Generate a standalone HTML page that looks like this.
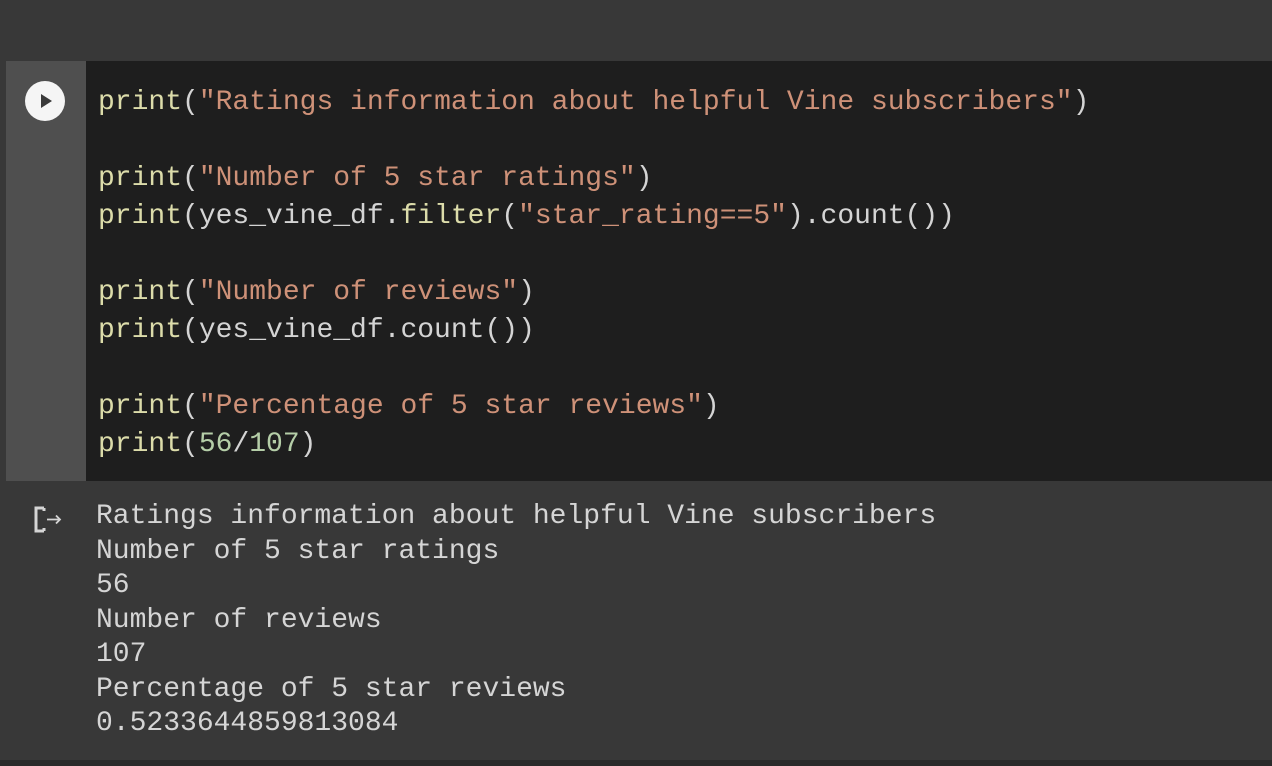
<!DOCTYPE html>
<html><head><style>
body{margin:0;width:1272px;height:766px;background:#383838;position:relative;overflow:hidden;font-family:"Liberation Mono",monospace;}
.cell{position:absolute;left:6px;top:61px;width:1266px;height:699px;background:#383838;}
.gut{position:absolute;left:6px;top:61px;width:80px;height:420px;background:#4f4f4f;}
.code{position:absolute;left:86px;top:61px;width:1186px;height:420px;background:#1e1e1e;}
.bot{position:absolute;left:0;top:760px;width:1272px;height:6px;background:#2a2a2a;}
.ln{position:absolute;left:98px;font-size:28px;white-space:pre;color:#d4d4d4;line-height:38px;}
.f{color:#dcdcaa}.s{color:#ce9178}.n{color:#b5cea8}
.out{position:absolute;left:96px;top:500px;font-size:28px;line-height:34.5px;color:#d5d5d5;white-space:pre;}
</style></head><body>
<div class="cell"></div><div class="gut"></div><div class="code"></div><div class="bot"></div>
<svg style="position:absolute;left:25px;top:81px" width="40" height="40"><circle cx="20" cy="20" r="20" fill="#f5f5f5"/><path d="M16 13 L27 20 L16 27Z" fill="#3a3a3a"/></svg>
<div class="ln" style="top:84px"><span class="f">print</span>(<span class="s">"Ratings information about helpful Vine subscribers"</span>)</div>
<div class="ln" style="top:160px"><span class="f">print</span>(<span class="s">"Number of 5 star ratings"</span>)</div>
<div class="ln" style="top:198px"><span class="f">print</span>(yes_vine_df.<span class="f">filter</span>(<span class="s">"star_rating==5"</span>).count())</div>
<div class="ln" style="top:274px"><span class="f">print</span>(<span class="s">"Number of reviews"</span>)</div>
<div class="ln" style="top:312px"><span class="f">print</span>(yes_vine_df.count())</div>
<div class="ln" style="top:388px"><span class="f">print</span>(<span class="s">"Percentage of 5 star reviews"</span>)</div>
<div class="ln" style="top:426px"><span class="f">print</span>(<span class="n">56</span>/<span class="n">107</span>)</div>
<svg style="position:absolute;left:34px;top:506px" width="30" height="28"><path d="M10 2 H2 V25 H10 M10 2 V5 M10 25 V22" stroke="#d5d5d5" stroke-width="3" fill="none"/><path d="M13 13.5 H26 M22 9.5 L26 13.5 L22 17.5" stroke="#d5d5d5" stroke-width="1.8" fill="none"/></svg>
<div class="out">Ratings information about helpful Vine subscribers
Number of 5 star ratings
56
Number of reviews
107
Percentage of 5 star reviews
0.5233644859813084</div>
</body></html>
